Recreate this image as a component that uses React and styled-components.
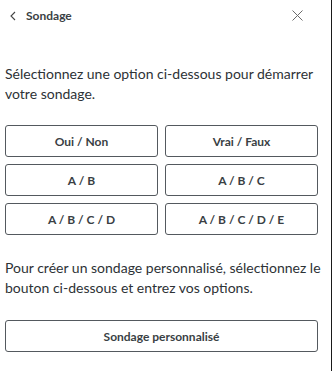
import React from "react";
import styled, { createGlobalStyle } from "styled-components";

const Global = createGlobalStyle`
  html, body { margin: 0; padding: 0; background: #fff; }
  body { font-family: Lato, "Noto Sans", sans-serif; color: #2d3236; }
  * { box-sizing: border-box; }
`;

const Panel = styled.div`
  width: 332px;
  height: 371px;
  border-right: 1px solid #1a1a1a;
  background: #fff;
  display: flex;
  flex-direction: column;
`;

const Header = styled.div`
  height: 31px;
  display: flex;
  align-items: center;
  padding: 0 0 0 10px;
`;

const BackButton = styled.button`
  border: 0;
  background: none;
  padding: 0;
  display: flex;
  align-items: center;
  gap: 10px;
  cursor: pointer;
  color: #3a3f44;
`;

const Title = styled.span`
  font-family: Lato, "Noto Sans", sans-serif;
  font-weight: 700;
  font-size: 12px;
  color: #3a3f44;
`;

const CloseButton = styled.button`
  margin-left: auto;
  margin-right: 28px;
  border: 0;
  background: none;
  padding: 0;
  display: flex;
  cursor: pointer;
`;

const Body = styled.div`
  padding: 33px 3px 0 5px;
  display: flex;
  flex-direction: column;
`;

const Text = styled.p`
  margin: 0;
  font-size: 14px;
  line-height: 20px;
  color: #2d3236;
  margin-top: ${(p) => p.$top || 0}px;
`;

const Grid = styled.div`
  margin-top: 21px;
  display: grid;
  grid-template-columns: 153px 153px;
  gap: 7px;
`;

const OptionButton = styled.button`
  height: 32px;
  width: ${(p) => (p.$wide ? "313px" : "153px")};
  border: 1px solid #54595e;
  border-radius: 3px;
  background: #fff;
  font-family: Lato, "Noto Sans", sans-serif;
  font-weight: 700;
  font-size: 12px;
  color: #3a3f44;
  cursor: pointer;
  padding: 0;
`;

const CustomWrap = styled.div`
  margin-top: 22px;
`;

const Chevron = () => (
  <svg width="6" height="10" viewBox="0 0 6 10" fill="none">
    <path d="M5 1 L1 5 L5 9" stroke="#444" strokeWidth="1.1" />
  </svg>
);

const Close = () => (
  <svg width="11" height="11" viewBox="0 0 11 11" fill="none">
    <path d="M0.5 0.5 L10.5 10.5 M10.5 0.5 L0.5 10.5" stroke="#6b6b6b" strokeWidth="1" />
  </svg>
);

const options = [
  "Oui / Non",
  "Vrai / Faux",
  "A / B",
  "A / B / C",
  "A / B / C / D",
  "A / B / C / D / E",
];

export default function App() {
  return (
    <>
      <Global />
      <Panel>
        <Header>
          <BackButton>
            <Chevron />
            <Title>Sondage</Title>
          </BackButton>
          <CloseButton aria-label="Fermer">
            <Close />
          </CloseButton>
        </Header>
        <Body>
          <Text>Sélectionnez une option ci-dessous pour démarrer votre sondage.</Text>
          <Grid>
            {options.map((o) => (
              <OptionButton key={o}>{o}</OptionButton>
            ))}
          </Grid>
          <Text $top={23}>
            Pour créer un sondage personnalisé, sélectionnez le bouton ci-dessous et entrez vos options.
          </Text>
          <CustomWrap>
            <OptionButton $wide>Sondage personnalisé</OptionButton>
          </CustomWrap>
        </Body>
      </Panel>
    </>
  );
}
